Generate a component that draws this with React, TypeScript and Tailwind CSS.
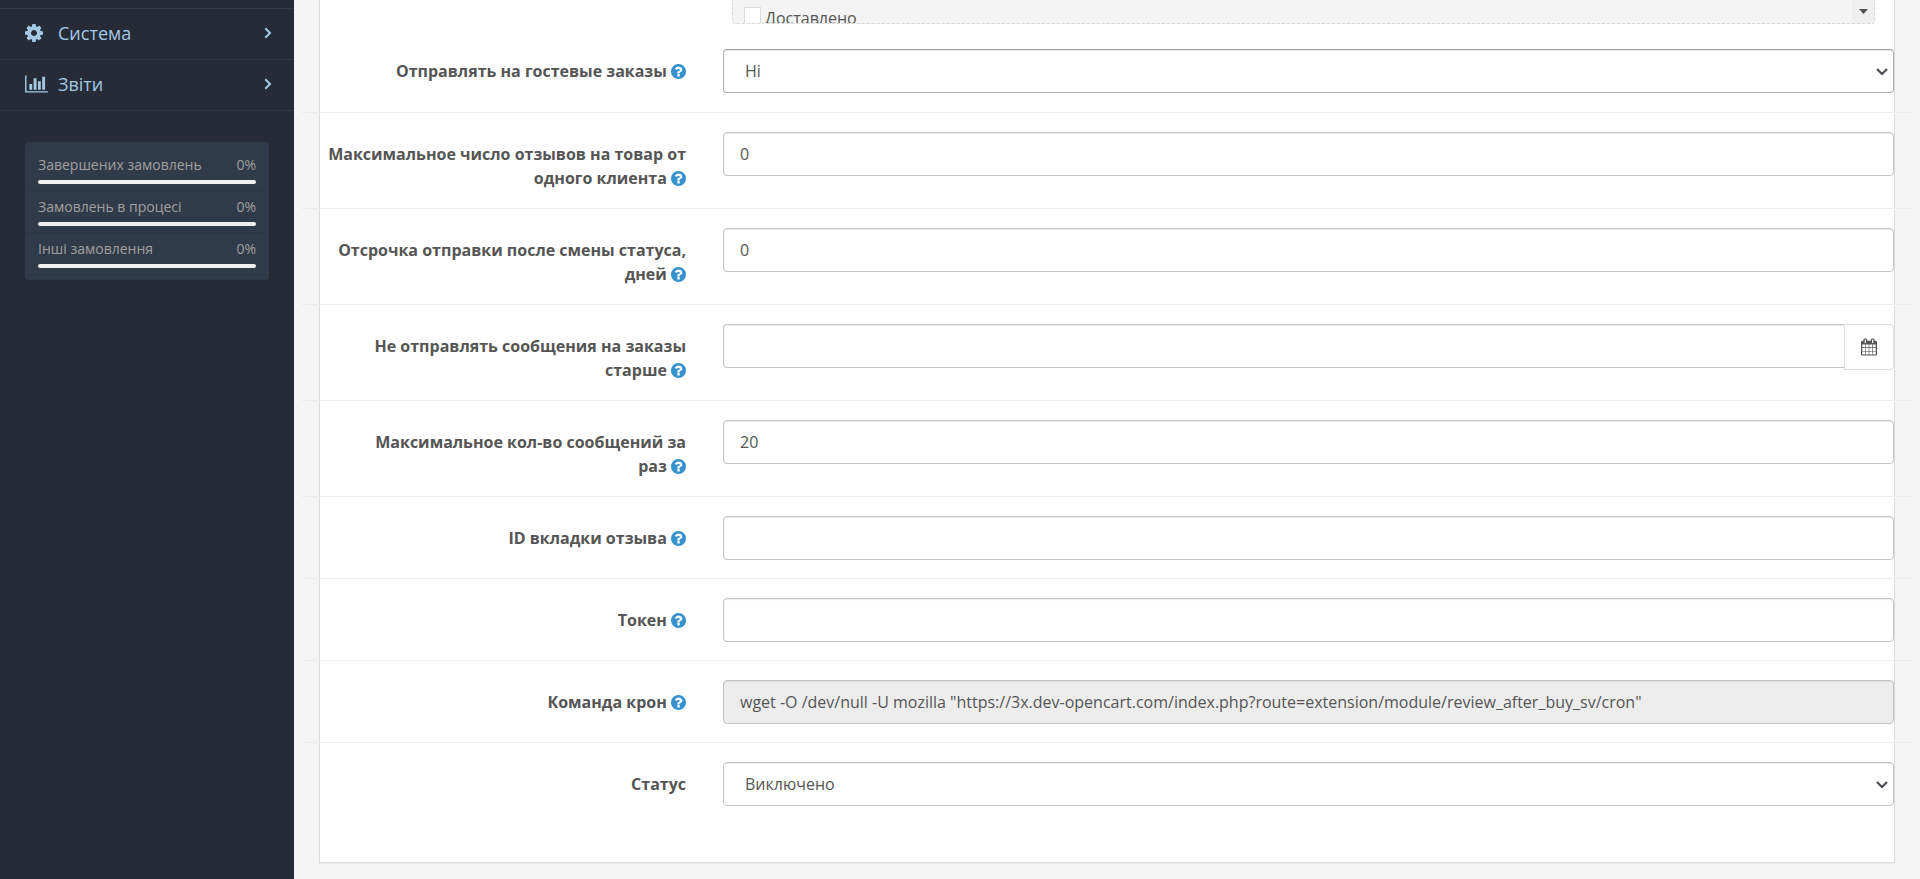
import type { ReactNode } from "react";

const inputBase =
  "block h-[44px] w-full rounded-[4px] border border-[#c4c4c4] px-[16px] text-[16px] text-[#555] shadow-[inset_0_1px_1px_rgba(0,0,0,0.08)] outline-none";

function CogIcon() {
  return (
    <svg viewBox="128 128 1536 1536" className="size-[18px]" fill="currentColor" aria-hidden="true">
      <path d="M1152 896q0-106-75-181t-181-75-181 75-75 181 75 181 181 75 181-75 75-181zm512-109v222q0 12-8 23t-20 13l-185 28q-19 54-39 91 35 50 107 138 10 12 10 25t-9 23q-27 37-99 108t-94 71q-12 0-26-9l-138-108q-44 23-91 38-16 136-29 186-7 28-36 28h-222q-14 0-24.500-8.500t-11.500-21.500l-28-184q-49-16-90-37l-141 107q-10 9-25 9-14 0-25-11-126-114-165-168-7-10-7-23 0-12 8-23 15-21 51-66.500t54-70.500q-27-50-41-99l-183-27q-13-2-21-12.500t-8-23.500v-222q0-12 8-23t19-13l186-28q14-46 39-92-40-57-107-138-10-12-10-24 0-10 9-23 26-36 98.500-107.500t94.500-71.500q13 0 26 10l138 107q44-23 91-38 16-136 29-186 7-28 36-28h222q14 0 24.500 8.500t11.500 21.500l28 184q49 16 90 37l142-107q9-9 24-9 13 0 25 10 129 119 165 170 7 8 7 22 0 12-8 23-15 21-51 66.500t-54 70.500q26 50 41 98l183 28q13 2 21 12.500t8 23.500z" />
    </svg>
  );
}

function HelpIcon() {
  return (
    <svg viewBox="128 128 1536 1536" className="inline size-[15px] align-[-2px] text-[#3692cf]" fill="currentColor" aria-hidden="true">
      <path d="M1024 1376v-192q0-14-9-23t-23-9h-192q-14 0-23 9t-9 23v192q0 14 9 23t23 9h192q14 0 23-9t9-23zm256-672q0-88-55.500-163t-138.500-116-170-41q-243 0-371 213-15 24 8 42l132 100q7 6 19 6 16 0 25-12 53-68 86-92 34-24 86-24 48 0 85.500 26t37.500 59q0 38-20 61t-68 45q-63 28-115.500 86.500t-52.500 125.500v36q0 14 9 23t23 9h192q14 0 23-9t9-23q0-19 21.500-49.500t54.500-49.500q32-18 49-28.500t46-35 44.500-48 28-60.500 12.500-81zm384 192q0 209-103 385.500t-279.500 279.500-385.500 103-385.500-103-279.500-279.500-103-385.500 103-385.500 279.500-279.500 385.500-103 385.500 103 279.500 279.500 103 385.500z" />
    </svg>
  );
}

function BarChartIcon() {
  return (
    <svg viewBox="0 0 2048 1792" className="h-[20px] w-[23px]" fill="currentColor" aria-hidden="true">
      <path d="M640 896v512H384V896h256zm384-512v1024H768V384h256zm1024 1152v128H0V128h128v1408h1920zm-640-896v768h-256V640h256zm384-384v1152h-256V256h256z" />
    </svg>
  );
}

function CalendarIcon() {
  return (
    <svg viewBox="0 0 1664 1792" className="h-[18px] w-[16px]" fill="currentColor" aria-hidden="true">
      <path d="M128 1664h288v-288H128v288zm352 0h320v-288H480v288zm-352-352h288V992H128v320zm352 0h320V992H480v320zM128 928h288V640H128v288zm736 736h320v-288H864v288zM480 928h320V640H480v288zm768 736h288v-288h-288v288zm-384-352h320V992H864v320zM512 448V160q0-13-9.500-22.500T480 128h-64q-13 0-22.500 9.500T384 160v288q0 13 9.500 22.500T416 480h64q13 0 22.500-9.500T512 448zm736 864h288V992h-288v320zM864 928h320V640H864v288zm384 0h288V640h-288v288zm32-480V160q0-13-9.500-22.500T1248 128h-64q-13 0-22.500 9.500T1152 160v288q0 13 9.500 22.500t22.500 9.500h64q13 0 22.500-9.500t9.500-22.500zm384-64v1280q0 52-38 90t-90 38H128q-52 0-90-38t-38-90V384q0-52 38-90t90-38h128v-96q0-66 47-113T416 0h64q66 0 113 47t47 113v96h384v-96q0-66 47-113t113-47h64q66 0 113 47t47 113v96h128q52 0 90 38t38 90z" />
    </svg>
  );
}

function AngleRight() {
  return (
    <svg viewBox="0 0 8 12" className="h-[12px] w-[8px]" fill="none" stroke="currentColor" strokeWidth="2" aria-hidden="true">
      <path d="M1.300 1.200 6 6l-4.700 4.800" />
    </svg>
  );
}

function NavItem({ icon, label }: { icon: ReactNode; label: string }) {
  return (
    <li>
      <a href="#" className="flex h-[51px] items-center border-t border-[#2e3a47] pr-[22px] pb-[2px] pl-[25px] text-[18px] text-[#a5c9e3]">
        <span className="w-[33px]">{icon}</span>
        <span className="grow">{label}</span>
        <AngleRight />
      </a>
    </li>
  );
}

function Stat({ label }: { label: string }) {
  return (
    <li className="border-b border-[#2c3745] px-[13px] py-[6px]">
      <div className="flex justify-between text-[14px] leading-[19px] text-[#a0a0a0]">
        <span>{label}</span>
        <span>0%</span>
      </div>
      <div className="mt-[6px] h-[4px] rounded-[2px] bg-[#f0f0f0]" />
    </li>
  );
}

function Field({ id, label, help = true, first = false, children }: { id: string; label: string; help?: boolean; first?: boolean; children: ReactNode }) {
  return (
    <div className={first ? "-mx-[19px] flex pt-[25px] pb-[19px]" : "-mx-[19px] flex border-t border-[#ededed] pt-[19px] pb-[18px]"}>
      <label htmlFor={id} className="w-1/4 pt-[10px] pr-[18px] pl-[22px] text-right text-[16px] leading-[24px] font-bold whitespace-pre-line text-[#555]">
        {help ? `${label} ` : label}
        {help && <HelpIcon />}
      </label>
      <div className="w-3/4 px-[19px]">{children}</div>
    </div>
  );
}

function Select({ id, value, dark = false }: { id: string; value: string; dark?: boolean }) {
  return (
    <div className="relative">
      <select
        id={id}
        className={
          dark
            ? "block h-[44px] w-full appearance-none rounded-[4px] border border-[#b0b0b0] border-t-[#999] bg-white px-[21px] text-[16px] text-[#555] shadow-[inset_0_1px_1px_rgba(0,0,0,0.08)] outline-none"
            : "block h-[44px] w-full appearance-none rounded-[4px] border border-[#c4c4c4] bg-white px-[21px] text-[16px] text-[#555] shadow-[inset_0_1px_1px_rgba(0,0,0,0.08)] outline-none"
        }
      >
        <option>{value}</option>
      </select>
      <svg viewBox="0 0 12 8" className="pointer-events-none absolute top-[19px] right-[6px] h-[8px] w-[12px]" fill="none" stroke="#4b4b55" strokeWidth="2.200" aria-hidden="true">
        <path d="M1 1l5 5 5-5" />
      </svg>
    </div>
  );
}

export default function App() {
  return (
    <div className="flex min-h-screen bg-[#f5f5f5] font-['Open_Sans','Noto_Sans',sans-serif]">
      <aside className="w-[294px] shrink-0 bg-[#252c38]">
        <nav className="pt-[8px]">
          <ul className="border-b border-[#2e3a47]">
            <NavItem icon={<CogIcon />} label="Система" />
            <NavItem icon={<BarChartIcon />} label="Звіти" />
          </ul>
        </nav>
        <ul className="mx-[25px] mt-[31px] rounded-[4px] bg-[#2f3b49] pt-[7px] pb-[5px]">
          <Stat label="Завершених замовлень" />
          <Stat label="Замовлень в процесі" />
          <Stat label="Інші замовлення" />
        </ul>
      </aside>

      <main className="min-w-0 grow px-[25px] pb-[16px]">
        <form className="border border-t-0 border-[#dcdcdc] bg-white pb-[38px] shadow-[0_1px_1px_rgba(0,0,0,0.05)]">
          <div className="-mx-[19px] flex h-[24px] justify-end">
            <div className="w-3/4 pr-[38px] pl-[28px]">
              <div className="flex h-full justify-between overflow-hidden rounded-b-[3px] border border-t-0 border-dashed border-[#d8d8d8] bg-[#f4f4f4]">
                <label className="flex items-start gap-[4px] pl-[11px] text-[16px] leading-[23px] text-[#555]">
                  <input type="checkbox" className="mt-[7px] size-[17px] appearance-none border border-[#dcdcdc] bg-white" />
                  <span className="pt-[7px]">Доставлено</span>
                </label>
                <button type="button" aria-label="Прокрутити" className="flex w-[22px] justify-center bg-[#efefef] pt-[9px]">
                  <svg viewBox="0 0 9 5" className="h-[5px] w-[9px]" fill="#505050" aria-hidden="true">
                    <path d="M0 0h9L4.500 5z" />
                  </svg>
                </button>
              </div>
            </div>
          </div>

          <Field id="guest" label="Отправлять на гостевые заказы" first>
            <Select id="guest" value="Ні" dark />
          </Field>
          <Field id="max-reviews" label="Максимальное число отзывов на товар от одного клиента">
            <input id="max-reviews" defaultValue="0" className={inputBase} />
          </Field>
          <Field id="delay" label="Отсрочка отправки после смены статуса, дней">
            <input id="delay" defaultValue="0" className={inputBase} />
          </Field>
          <Field id="older" label="Не отправлять сообщения на заказы старше">
            <div className="flex items-start">
              <input
                id="older"
                className="block h-[44px] min-w-0 grow rounded-l-[4px] border border-r-0 border-[#c4c4c4] px-[16px] text-[16px] text-[#555] shadow-[inset_0_1px_1px_rgba(0,0,0,0.08)] outline-none"
              />
              <button type="button" aria-label="Календар" className="flex h-[46px] w-[50px] items-center justify-center rounded-r-[4px] border border-[#ddd] bg-white text-[#555]">
                <CalendarIcon />
              </button>
            </div>
          </Field>
          <Field id="batch" label={"Максимальное кол-во сообщений за\nраз"}>
            <input id="batch" defaultValue="20" className={inputBase} />
          </Field>
          <Field id="tab-id" label="ID вкладки отзыва">
            <input id="tab-id" className={inputBase} />
          </Field>
          <Field id="token" label="Токен">
            <input id="token" className={inputBase} />
          </Field>
          <Field id="cron" label="Команда крон">
            <input
              id="cron"
              readOnly
              defaultValue={'wget -O /dev/null -U mozilla "https://3x.dev-opencart.com/index.php?route=extension/module/review_after_buy_sv/cron"'}
              className="block h-[44px] w-full rounded-[4px] border border-[#c4c4c4] bg-[#ededed] px-[16px] text-[16px] text-[#555] shadow-[inset_0_1px_1px_rgba(0,0,0,0.08)] outline-none"
            />
          </Field>
          <Field id="status" label="Статус" help={false}>
            <Select id="status" value="Виключено" />
          </Field>
        </form>
      </main>
    </div>
  );
}
